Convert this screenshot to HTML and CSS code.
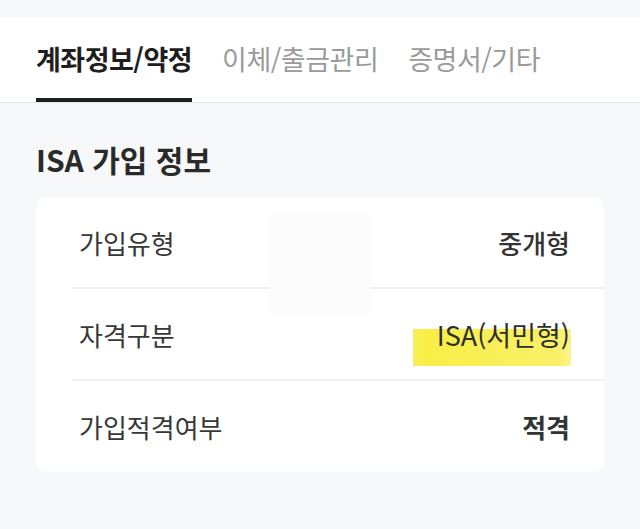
FILE: index.html
```html
<!DOCTYPE html>
<html lang="ko">
<head>
    <meta charset="UTF-8">
    <meta name="viewport" content="width=device-width, initial-scale=1.0">
    <title>ISA 가입 정보</title>
    <link rel="stylesheet" href="styles.css">
</head>
<body>
    <nav class="tabs">
        <a class="tab active" href="#">계좌정보/약정</a>
        <a class="tab" href="#">이체/출금관리</a>
        <a class="tab" href="#">증명서/기타</a>
    </nav>

    <section class="section">
        <h2>ISA 가입 정보</h2>
        <div class="card">
            <div class="row">
                <span class="label">가입유형</span>
                <span class="value">중개형</span>
            </div>
            <div class="row">
                <span class="label">자격구분</span>
                <span class="value marked">ISA(서민형)</span>
            </div>
            <div class="row">
                <span class="label">가입적격여부</span>
                <span class="value strong">적격</span>
            </div>
            <div class="blur-box"></div>
        </div>
    </section>
</body>
</html>
```

FILE: styles.css
```css
body {
    margin: 0;
    font-family: "Noto Sans CJK KR", "Noto Sans", sans-serif;
    background-color: #f7f8fa;
    color: #222;
}
.tabs {
    display: flex;
    gap: 30px;
    margin-top: 17px;
    padding: 0 36px;
    background: #fff;
    border-bottom: 1px solid #e3e4e6;
}
.tab {
    display: block;
    padding: 25px 0 22px;
    line-height: 34px;
    font-size: 27px;
    color: #9a9a9a;
    text-decoration: none;
    letter-spacing: -0.5px;
    border-bottom: 4px solid transparent;
}
.tab.active {
    color: #1e1e1e;
    font-weight: bold;
    border-bottom-color: #1e1e1e;
}
.section {
    padding: 0 36px;
}
.section h2 {
    margin: 38px 0 20px;
    font-size: 30px;
    line-height: 36px;
    font-weight: bold;
    color: #2a2a2a;
}
.card {
    position: relative;
    background: #fff;
    border-radius: 10px;
    padding-left: 36px;
}
.row {
    display: flex;
    justify-content: space-between;
    align-items: center;
    height: 90px;
    padding: 0 34px 0 7px;
    border-bottom: 2px solid #efefef;
    font-size: 26px;
    color: #383838;
}
.row:nth-child(3) {
    border-bottom: none;
    height: 91px;
}
.value {
    font-weight: 500;
    color: #333;
}
.value.strong {
    font-weight: bold;
}
.marked {
    position: relative;
    z-index: 1;
    font-size: 27px;
    font-weight: normal;
    color: #2e2e2e;
}
.marked::before {
    content: "";
    position: absolute;
    left: -24px;
    right: -1px;
    top: 14px;
    bottom: -12px;
    z-index: -1;
    background: linear-gradient(90deg, rgba(247, 236, 50, 0.8), #f8ee45 8%, #f9f06a 92%, rgba(249, 240, 110, 0.8));
}
.blur-box {
    position: absolute;
    left: 234px;
    top: 17px;
    width: 100px;
    height: 100px;
    background: #fcfcfc;
}
```
